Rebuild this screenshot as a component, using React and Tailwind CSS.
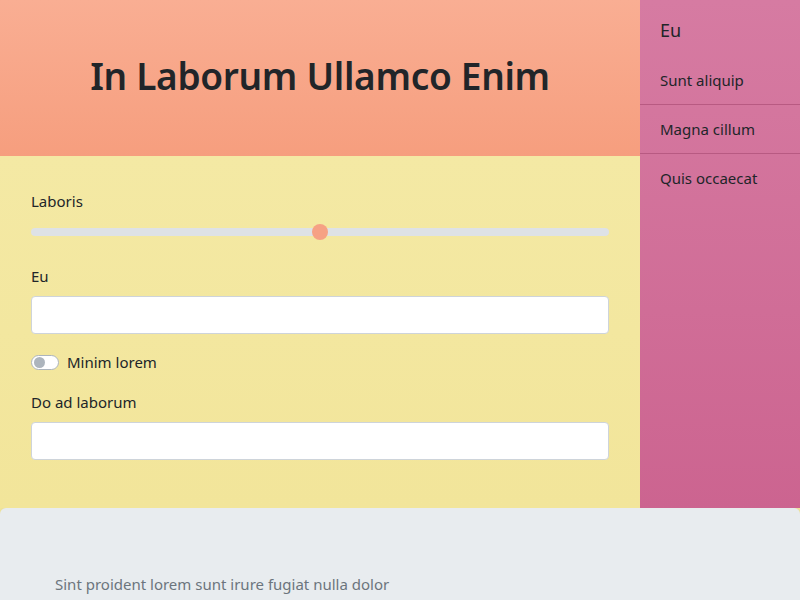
export default function App() {
  return (
    <div className="w-[800px] h-[600px] overflow-hidden bg-[#f2e79e] text-[#212529]" style={{ fontFamily: '"Noto Sans", "Open Sans", sans-serif' }}>
      <div className="flex h-[508px]">
        <div className="w-[640px] flex flex-col">
          <div className="h-[156px] flex items-center justify-center bg-gradient-to-b from-[#f9ae93] to-[#f69e7e] shadow-[0_1px_3px_rgba(0,0,0,0.08)]">
            <h1 className="text-[37px] font-semibold tracking-[-0.3px] mt-[-4px]">In Laborum Ullamco Enim</h1>
          </div>
          <div className="flex-1 bg-gradient-to-b from-[#f4e9a4] to-[#f2e59a] px-[31px] pt-[34px]">
            <div className="text-[15px] leading-[22px]">Laboris</div>
            <div className="relative mt-[12px] h-[16px] flex items-center">
              <div className="w-full h-[8px] rounded-full bg-[#dee2e6]"></div>
              <div className="absolute left-[281px] top-0 w-[16px] h-[16px] rounded-full bg-[#f6a184]"></div>
            </div>
            <div className="text-[15px] leading-[22px] mt-[25px]">Eu</div>
            <div className="mt-[9px] h-[38px] bg-white border border-[#ced4da] rounded-[4px]"></div>
            <div className="flex items-center mt-[17px] gap-[8px]">
              <div className="w-[28px] h-[15px] rounded-full bg-white border border-[#adb5bd] flex items-center px-[2px]">
                <div className="w-[11px] h-[11px] rounded-full bg-[#adb5bd]"></div>
              </div>
              <span className="text-[15px] leading-[22px]">Minim lorem</span>
            </div>
            <div className="text-[15px] leading-[22px] mt-[18px]">Do ad laborum</div>
            <div className="mt-[9px] h-[38px] bg-white border border-[#ced4da] rounded-[4px]"></div>
          </div>
        </div>
        <div className="w-[160px] bg-gradient-to-b from-[#d67ba2] to-[#cc6490]">
          <div className="px-[20px] pt-[18px] pb-[14px] text-[18px] leading-[24px]">Eu</div>
          <div className="px-[20px] h-[49px] flex items-center text-[15px] border-b border-[#b85a82]">Sunt aliquip</div>
          <div className="px-[20px] h-[49px] flex items-center text-[15px] border-b border-[#b85a82]">Magna cillum</div>
          <div className="px-[20px] h-[49px] flex items-center text-[15px]">Quis occaecat</div>
        </div>
      </div>
      <div className="h-[92px] bg-[#e8ecef] rounded-t-[6px] shadow-[0_-1px_4px_rgba(0,0,0,0.06)] px-[55px] pt-[66px]">
        <div className="text-[15px] leading-[20px] text-[#6c757d]">Sint proident lorem sunt irure fugiat nulla dolor</div>
      </div>
    </div>
  );
}
